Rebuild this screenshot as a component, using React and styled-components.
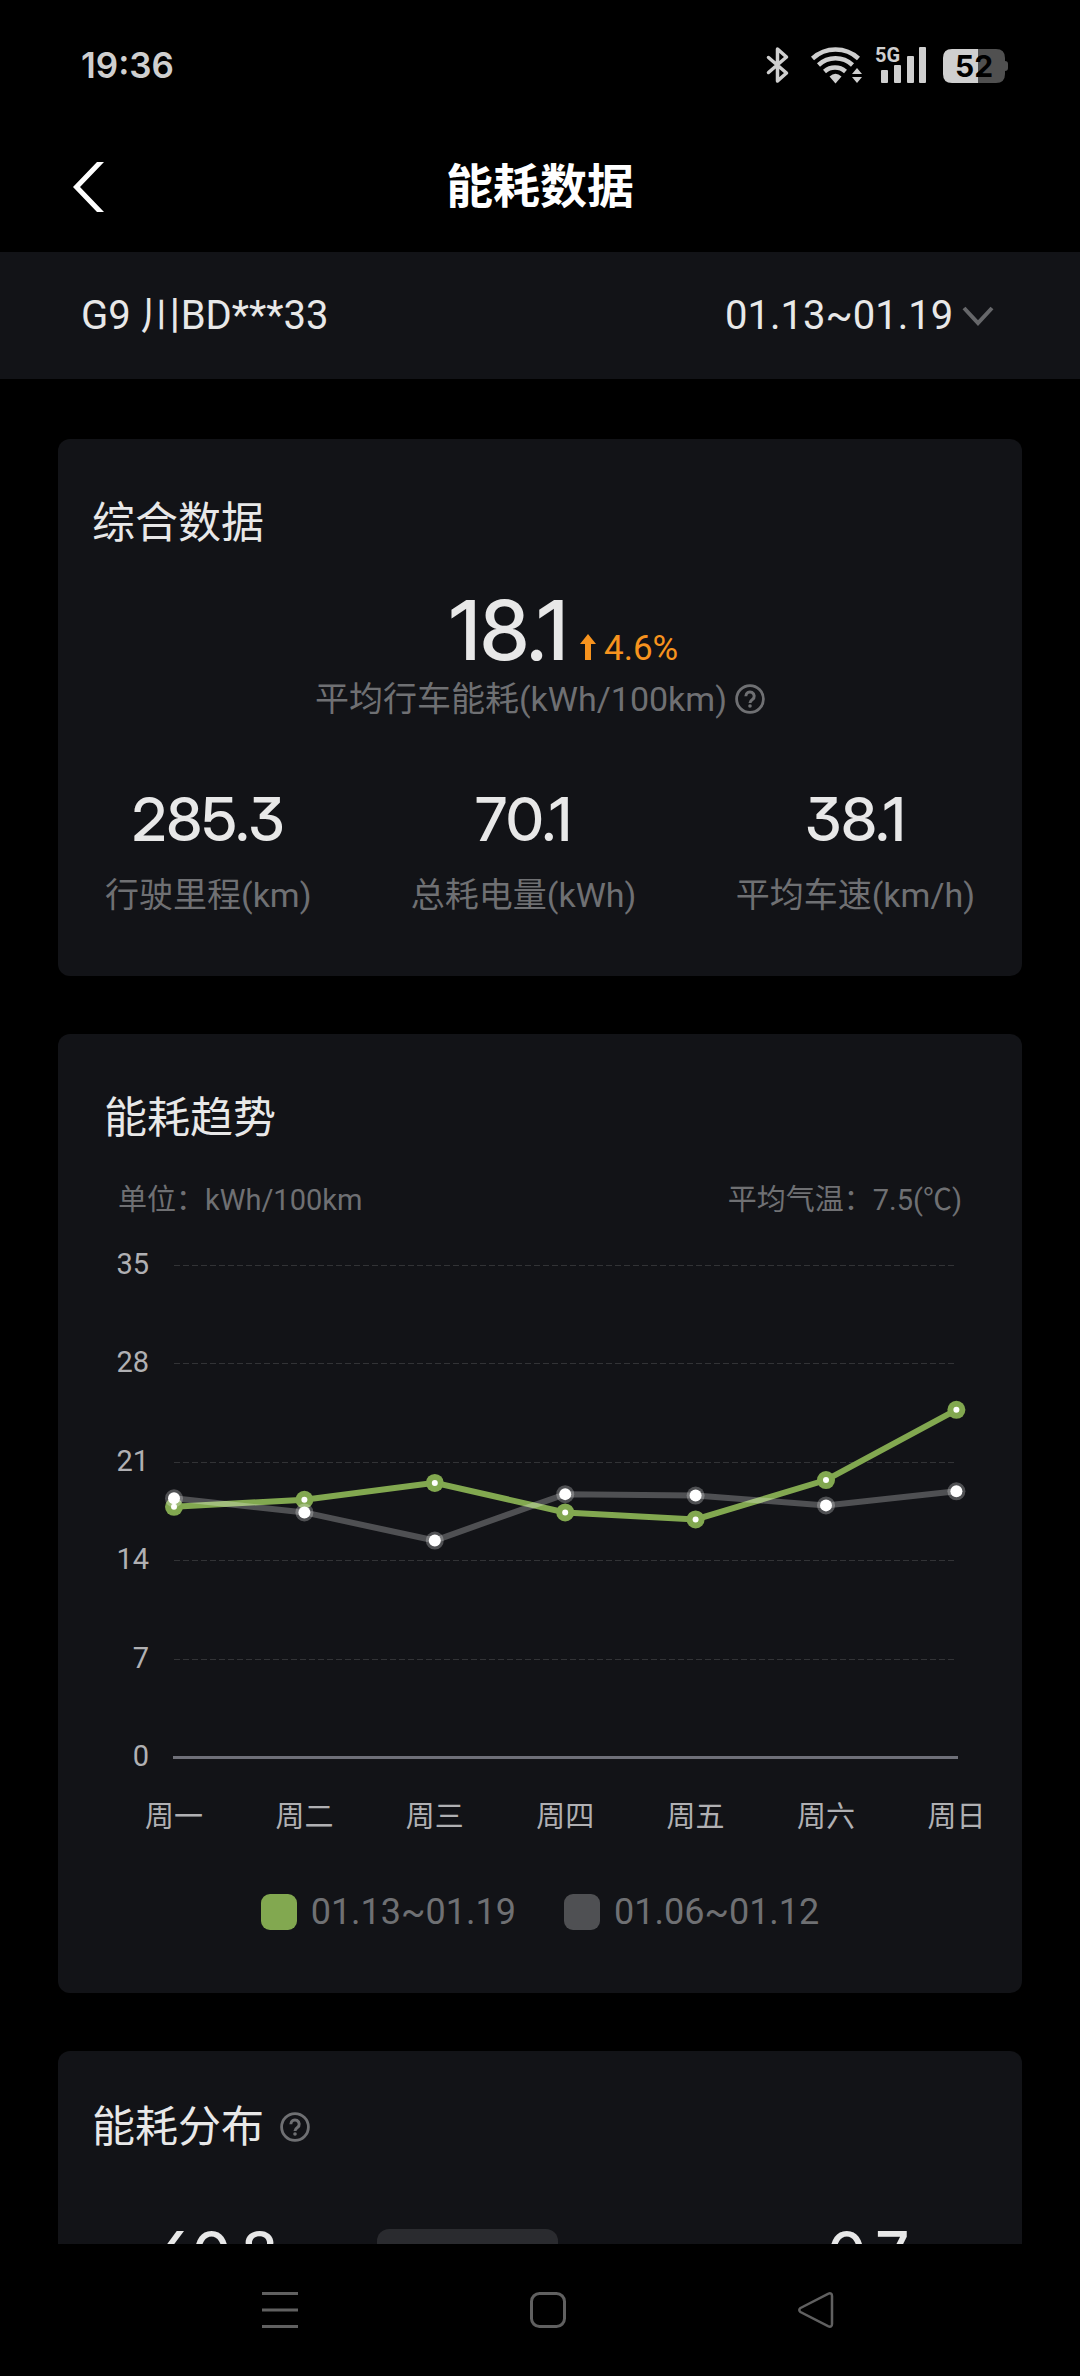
import React from 'react';
import styled, { createGlobalStyle } from 'styled-components';

const WEEK = ['周一', '周二', '周三', '周四', '周五', '周六', '周日'];
const THIS_WEEK = [17.8, 18.3, 19.5, 17.4, 16.9, 19.7, 24.7];
const LAST_WEEK = [18.4, 17.4, 15.4, 18.7, 18.6, 17.9, 18.9];
const TICKS = [35, 28, 21, 14, 7, 0];

const TOTALS = [
    { value: '285.3', label: '行驶里程(km)' },
    { value: '70.1', label: '总耗电量(kWh)' },
    { value: '38.1', label: '平均车速(km/h)' },
];

// chart scale, in viewBox units
const xAt = index => 116 + index * 130.4;
const yAt = value => 537 - (value * 492) / 35;

const toPoints = data =>
    data.map((value, index) => `${xAt(index)},${yAt(value)}`).join(' ');

const HelpIcon = () => (
    <svg width="30" height="30" viewBox="0 0 30 30" fill="none" aria-hidden="true">
        <circle cx="15" cy="15" r="13.4" stroke="#6f7073" strokeWidth="2.8" />
        <path
            d="M10.8 12.2a4.2 4.2 0 1 1 6.6 3.4c-1.6 1.1-2.4 1.8-2.4 3.4"
            stroke="#6f7073"
            strokeWidth="3"
        />
        <circle cx="15" cy="22" r="1.8" fill="#6f7073" />
    </svg>
);

const StatusIcons = () => (
    <svg width="246" height="40" viewBox="0 0 246 40" fill="#cfcfcf" aria-label="5G 52%">
        {/* bluetooth */}
        <path
            d="M4.5 12.5 22.5 28 13.5 36V4l9 8L4.5 27.5"
            fill="none"
            stroke="#cfcfcf"
            strokeWidth="3.5"
            strokeLinejoin="round"
            strokeLinecap="round"
        />
        {/* wifi */}
        <g fill="none" stroke="#cfcfcf" strokeWidth="4.5">
            <path d="M48.5 13.5a34 34 0 0 1 46 0" />
            <path d="M54.5 20a25 25 0 0 1 34 0" />
            <path d="M60.5 26.5a16 16 0 0 1 21 0" />
        </g>
        <path d="M65.5 31.5q6-5.500 12 0L71.5 38.5z" />
        <path d="m93 23 5 6H88zM93 38l5-6H88z" />
        {/* signal */}
        <text x="111" y="17" fontSize="20" fontWeight="700" fontFamily="Liberation Sans Narrow, Roboto, sans-serif">
            5G
        </text>
        <rect x="117" y="25" width="7" height="13" rx="1" />
        <rect x="130" y="20" width="7" height="18" rx="1" />
        <rect x="143" y="11" width="7" height="27" rx="1" />
        <rect x="155" y="2" width="7" height="36" rx="1" />
        {/* battery */}
        <path d="M214 4h18q9 0 9 9v3q3 0 3 3v4q0 3-3 3v3q0 9-9 9h-18z" fill="#505050" />
        <path d="M214 4h-26q-9 0-9 9v16q0 9 9 9h26z" />
        <text x="210" y="32" fontSize="30" fontWeight="700" textAnchor="middle" fill="#000" fontFamily="Inter, sans-serif">
            52
        </text>
    </svg>
);

const TrendChart = () => (
    <Chart viewBox="0 0 964 620" role="img" aria-label="能耗趋势">
        {TICKS.map(tick => (
            <React.Fragment key={tick}>
                <AxisText x="91" y={yAt(tick) + 9} textAnchor="end">
                    {tick}
                </AxisText>
                {tick > 0 && (
                    <line
                        x1="116"
                        x2="897"
                        y1={Math.round(yAt(tick)) + 0.5}
                        y2={Math.round(yAt(tick)) + 0.5}
                        stroke="#323336"
                        strokeDasharray="6 3"
                    />
                )}
            </React.Fragment>
        ))}
        <line x1="115" x2="900" y1="537.5" y2="537.5" stroke="#6f7079" strokeWidth="3" />
        {WEEK.map((day, index) => (
            <AxisText key={day} x={xAt(index)} y="607" textAnchor="middle">
                {day}
            </AxisText>
        ))}

        <polyline points={toPoints(THIS_WEEK)} fill="none" stroke="#82a850" strokeWidth="6" />
        {THIS_WEEK.map((value, index) => (
            <React.Fragment key={index}>
                <circle cx={xAt(index)} cy={yAt(value)} r="9" fill="#82a850" />
                <circle cx={xAt(index)} cy={yAt(value)} r="3" fill="#fff" />
            </React.Fragment>
        ))}

        <polyline
            points={toPoints(LAST_WEEK)}
            fill="none"
            stroke="#fff"
            strokeOpacity="0.26"
            strokeWidth="6"
        />
        {LAST_WEEK.map((value, index) => (
            <React.Fragment key={index}>
                <circle cx={xAt(index)} cy={yAt(value)} r="9" fill="#fff" fillOpacity="0.26" />
                <circle cx={xAt(index)} cy={yAt(value)} r="6" fill="#fff" />
            </React.Fragment>
        ))}
    </Chart>
);

const App = () => {
    return (
        <Page>
            <GlobalStyle />
            <StatusBar>
                <Clock>19:36</Clock>
                <StatusIcons />
            </StatusBar>

            <Header>
                <BackButton type="button" aria-label="返回">
                    <svg width="31" height="50" viewBox="0 0 31 50" fill="#fff">
                        <path d="M24 0h7L7 25l24 25h-7L0 25z" />
                    </svg>
                </BackButton>
                <PageTitle>能耗数据</PageTitle>
            </Header>

            <VehicleBar>
                <span>G9 川BD***33</span>
                <RangeBox>
                    <RangeSelect aria-label="日期范围" defaultValue="01.13~01.19">
                        <option>01.13~01.19</option>
                        <option>01.06~01.12</option>
                    </RangeSelect>
                    <svg width="32" height="20" viewBox="0 0 32 20" fill="none" aria-hidden="true">
                        <path d="m2 2 14 15L30 2" stroke="#66676a" strokeWidth="4" />
                    </svg>
                </RangeBox>
            </VehicleBar>

            <Content>
                <Card>
                    <CardTitle>综合数据</CardTitle>
                    <Average>
                        <BigValue>18.1</BigValue>
                        <Change>
                            <svg width="16" height="26" viewBox="0 0 16 26" fill="#f7931e" aria-hidden="true">
                                <path d="m8 0 8 10h-5v16H5V10H0z" />
                            </svg>
                            4.6%
                        </Change>
                    </Average>
                    <AverageLabel>
                        平均行车能耗(kWh/100km)
                        <HelpButton type="button" aria-label="说明">
                            <HelpIcon />
                        </HelpButton>
                    </AverageLabel>
                    <Totals>
                        {TOTALS.map(({ value, label }) => (
                            <Total key={label}>
                                <Value>{value}</Value>
                                <Label>{label}</Label>
                            </Total>
                        ))}
                    </Totals>
                </Card>

                <Card>
                    <CardTitle $inset>能耗趋势</CardTitle>
                    <ChartInfo>
                        <span>单位：kWh/100km</span>
                        <span>平均气温：7.5(℃)</span>
                    </ChartInfo>
                    <TrendChart />
                    <Legend>
                        <LegendItem $color="#82a850">01.13~01.19</LegendItem>
                        <LegendItem $color="#4f5053">01.06~01.12</LegendItem>
                    </Legend>
                </Card>

                <Card $compact>
                    <CardTitle>
                        能耗分布
                        <HelpButton type="button" aria-label="说明">
                            <HelpIcon />
                        </HelpButton>
                    </CardTitle>
                    <Distribution>
                        <Value>60.8</Value>
                        <Tile />
                        <Value>0.7</Value>
                    </Distribution>
                </Card>
            </Content>

            <NavBar>
                <NavButton type="button" aria-label="最近任务">
                    <svg width="36" height="36" viewBox="0 0 36 36" stroke="#606060" strokeWidth="3">
                        <path d="M0 1.5h36M0 18h36M0 34.5h36" />
                    </svg>
                </NavButton>
                <NavButton type="button" aria-label="主屏幕">
                    <svg width="36" height="36" viewBox="0 0 36 36" fill="none" stroke="#606060" strokeWidth="3">
                        <rect x="1.5" y="1.5" width="33" height="33" rx="8" />
                    </svg>
                </NavButton>
                <NavButton type="button" aria-label="返回上一页">
                    <svg width="36" height="36" viewBox="0 0 36 36" fill="none" stroke="#606060" strokeWidth="2.5">
                        <path d="M2.5 16 30 1.8q4-1.5 4 2.2v28q0 3.7-4 2.2L2.5 20q-2.5-2 0-4z" />
                    </svg>
                </NavButton>
            </NavBar>
        </Page>
    );
};

export default App;

const GlobalStyle = createGlobalStyle`
    * {
        box-sizing: border-box;
    }

    body {
        margin: 0;
        background: #000;
    }

    svg {
        display: block;
        flex-shrink: 0;
        overflow: visible;
    }

    button {
        padding: 0;
        border: 0;
        background: none;
        cursor: pointer;
    }
`;

const Page = styled.div`
    height: 100vh;
    display: flex;
    flex-direction: column;
    background: #000;
    color: #e8e8e8;
    font-family: Roboto, 'Noto Sans CJK SC', sans-serif;
`;

const StatusBar = styled.div`
    flex: none;
    height: 122px;
    padding: 8px 70px 0 81px;
    display: flex;
    justify-content: space-between;
    align-items: center;
`;

const Clock = styled.time`
    color: #cfcfcf;
    font-family: Inter, sans-serif;
    font-size: 35px;
    font-weight: 600;
`;

const Header = styled.header`
    flex: none;
    height: 130px;
    padding: 0 73px;
    display: grid;
    grid-template-columns: 60px 1fr 60px;
    align-items: center;
`;

const BackButton = styled.button`
    height: 80px;
    display: flex;
    align-items: center;
`;

const PageTitle = styled.h1`
    margin: 0;
    color: #fff;
    font-size: 47px;
    line-height: 64px;
    font-weight: 700;
    text-align: center;
`;

const VehicleBar = styled.div`
    flex: none;
    height: 127px;
    padding: 0 86px 0 81px;
    display: flex;
    justify-content: space-between;
    align-items: center;
    background: #121317;
    font-size: 40px;
    line-height: 56px;
`;

const RangeBox = styled.div`
    display: flex;
    align-items: center;
    gap: 8px;
`;

const RangeSelect = styled.select`
    appearance: none;
    padding: 0;
    border: 0;
    background: none;
    color: inherit;
    font: inherit;
`;

const Content = styled.main`
    flex: 1;
    min-height: 0;
    padding: 60px 58px 0;
    overflow: hidden;
    display: flex;
    flex-direction: column;
    gap: 58px;
`;

const Card = styled.section`
    flex: none;
    padding: ${props => (props.$compact ? '46px' : '54px')} 0 57px;
    border-radius: 12px;
    background: #121317;
`;

const CardTitle = styled.h2`
    margin: 0;
    padding: 0 ${props => (props.$inset ? '46px' : '34px')};
    display: flex;
    align-items: center;
    gap: 16px;
    font-size: 43px;
    line-height: 60px;
    font-weight: 400;
`;

const HelpButton = styled.button`
    display: flex;
`;

const Average = styled.div`
    margin-top: 36px;
    padding-left: 48px;
    display: flex;
    justify-content: center;
    align-items: baseline;
    gap: 12px;
`;

// flat-topped 3 and open 6
const BigValue = styled.strong`
    font-family: 'Inter Display', Inter, sans-serif;
    font-feature-settings: 'cv03', 'cv09';
    font-size: 82px;
    line-height: 84px;
    font-weight: 500;
`;

const Change = styled.span`
    display: flex;
    align-items: baseline;
    gap: 8px;
    color: #f7931e;
    font-size: 35px;
    line-height: 48px;
`;

const AverageLabel = styled.div`
    margin-top: 2px;
    display: flex;
    justify-content: center;
    align-items: center;
    gap: 8px;
    color: #6f7073;
    font-size: 34px;
    line-height: 48px;
`;

const Totals = styled.div`
    margin-top: 60px;
    padding: 0 47px;
    display: flex;
    justify-content: space-between;
`;

const Total = styled.div`
    display: flex;
    flex-direction: column;
    align-items: center;
    gap: 16px;
`;

const Value = styled.strong`
    font-family: 'Inter Display', Inter, sans-serif;
    font-feature-settings: 'cv03', 'cv09';
    font-size: 60px;
    line-height: 72px;
    font-weight: 500;
`;

const Label = styled.span`
    color: #6f7073;
    font-size: 34px;
    line-height: 48px;
`;

const ChartInfo = styled.div`
    margin-top: 32px;
    padding: 0 60px;
    display: flex;
    justify-content: space-between;
    color: #6f7073;
    font-size: 29px;
    line-height: 40px;
`;

const Chart = styled.svg`
    width: 100%;
    height: auto;
`;

const AxisText = styled.text`
    fill: #b0b0b3;
    font-size: 29px;
`;

const Legend = styled.div`
    margin-top: 48px;
    display: flex;
    justify-content: center;
    gap: 48px;
`;

const LegendItem = styled.div`
    display: flex;
    align-items: center;
    gap: 14px;
    color: #6f7073;
    font-size: 36px;
    line-height: 48px;

    &::before {
        content: '';
        width: 36px;
        height: 36px;
        border-radius: 9px;
        background: ${props => props.$color};
    }
`;

const Distribution = styled.div`
    margin-top: 60px;
    display: grid;
    grid-template-columns: 319px 181px 1fr 308px;
    justify-items: center;

    & > :last-child {
        grid-column: 4;
    }
`;

const Tile = styled.div`
    width: 100%;
    height: 72px;
    margin-top: 12px;
    border-radius: 12px;
    background: #2a2b2f;
`;

const NavBar = styled.nav`
    flex: none;
    height: 132px;
    padding: 0 130px 0 146px;
    display: flex;
    align-items: center;
    background: #000;
`;

const NavButton = styled.button`
    flex: 1;
    height: 100%;
    display: flex;
    justify-content: center;
    align-items: center;
`;
